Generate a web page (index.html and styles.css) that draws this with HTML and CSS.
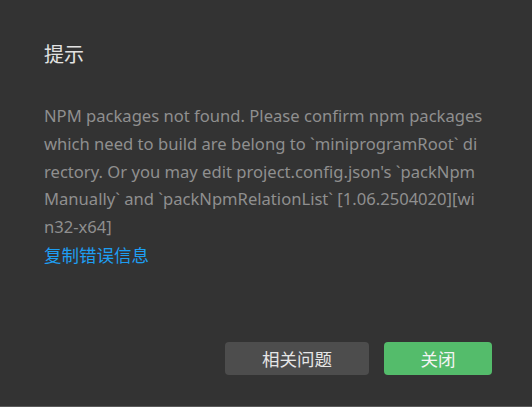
FILE: index.html
```html
<!DOCTYPE html>
<html lang="zh-CN">
<head>
<meta charset="utf-8">
<title>提示</title>
<link rel="stylesheet" href="styles.css">
</head>
<body>
<div class="dialog">
  <div class="title">提示</div>
  <div class="message">
    <span class="line">NPM packages not found. Please confirm npm packages</span>
    <span class="line">which need to build are belong to `miniprogramRoot` di</span>
    <span class="line">rectory. Or you may edit project.config.json's `packNpm</span>
    <span class="line">Manually` and `packNpmRelationList` [1.06.2504020][wi</span>
    <span class="line">n32-x64]</span>
    <a class="copy-link" href="#">复制错误信息</a>
  </div>
  <div class="footer">
    <button class="btn btn-secondary">相关问题</button>
    <button class="btn btn-primary">关闭</button>
  </div>
</div>
</body>
</html>
```
FILE: styles.css
```css
html, body {
  margin: 0;
  padding: 0;
  background: #333333;
}
body {
  font-family: "Noto Sans", "Noto Sans CJK SC", sans-serif;
}
.dialog {
  box-sizing: border-box;
  height: 407px;
  border-bottom: 1px solid #5a5a5a;
  display: flex;
  flex-direction: column;
  padding: 40px 40px 31px 44px;
}
.title {
  font-family: "Noto Sans CJK SC", sans-serif;
  font-size: 20px;
  line-height: 28px;
  color: #e2e2e2;
}
.message {
  margin-top: 34px;
  font-size: 16.6px;
  line-height: 27.75px;
  color: #8f8f8f;
}
.line {
  display: block;
  white-space: nowrap;
}
.copy-link {
  display: block;
  font-family: "Noto Sans CJK SC", sans-serif;
  font-size: 17.5px;
  color: #1e9ef2;
  text-decoration: none;
}
.footer {
  margin-top: auto;
  display: flex;
  justify-content: flex-end;
  gap: 15px;
}
.btn {
  height: 33px;
  border: none;
  border-radius: 4px;
  font-family: "Noto Sans CJK SC", sans-serif;
  font-size: 17.5px;
  padding: 0;
}
.btn-secondary {
  width: 144px;
  background: #4d4d4d;
  color: #e6e6e6;
}
.btn-primary {
  width: 108px;
  background: #54bc6b;
  color: #f4f4f4;
}
```
